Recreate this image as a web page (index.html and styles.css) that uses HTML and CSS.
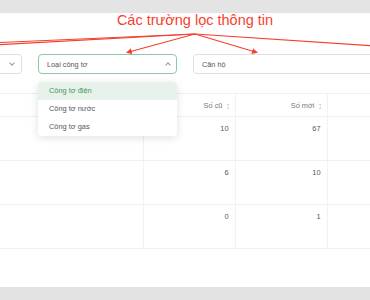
FILE: index.html
```html
<!DOCTYPE html>
<html lang="vi">
<head>
  <meta charset="UTF-8">
  <meta name="viewport" content="width=device-width, initial-scale=1.0">
  <title>Chỉ số công tơ</title>
  <link rel="stylesheet" href="styles.css">
</head>
<body>
  <div class="topbar"></div>
  <div class="panel">
    <h2 class="note">Các trường lọc thông tin</h2>

    <div class="filters">
      <div class="field field-first">
        <span class="chev chev-down"></span>
      </div>
      <div class="field field-active">
        <span class="field-text">Loại công tơ</span>
        <span class="chev chev-up"></span>
      </div>
      <div class="field field-input">
        <span class="field-text">Căn hộ</span>
      </div>
    </div>

    <div class="dropdown">
      <div class="option selected">Công tơ điện</div>
      <div class="option">Công tơ nước</div>
      <div class="option">Công tơ gas</div>
    </div>

    <table class="meters">
      <colgroup>
        <col class="col-main">
        <col class="col-num">
        <col class="col-num">
        <col class="col-num">
      </colgroup>
      <thead>
        <tr>
          <th></th>
          <th>Số cũ <span class="sorter"></span></th>
          <th>Số mới <span class="sorter"></span></th>
          <th></th>
        </tr>
      </thead>
      <tbody>
        <tr><td></td><td>10</td><td>67</td><td></td></tr>
        <tr><td></td><td>6</td><td>10</td><td></td></tr>
        <tr><td></td><td>0</td><td>1</td><td></td></tr>
      </tbody>
    </table>
  </div>
  <div class="bottombar"></div>

  <svg class="arrows" width="370" height="300" viewBox="0 0 370 300">
    <defs>
      <marker id="head" markerWidth="6" markerHeight="6" refX="5" refY="3" orient="auto" markerUnits="userSpaceOnUse">
        <path d="M0 0 L6 3 L0 6 Z" fill="#f4412f"/>
      </marker>
    </defs>
    <g stroke="#f4412f" stroke-width="1.2" fill="none">
      <line x1="195" y1="34" x2="-5" y2="42.7"/>
      <line x1="195" y1="34" x2="-5" y2="44.8"/>
      <line x1="195" y1="34" x2="127" y2="52.5" marker-end="url(#head)"/>
      <line x1="195" y1="34" x2="257" y2="52.5" marker-end="url(#head)"/>
      <line x1="195" y1="34" x2="375" y2="46"/>
    </g>
  </svg>
</body>
</html>
```

FILE: styles.css
```css
* { margin: 0; padding: 0; box-sizing: border-box; }

body {
  font-family: 'Liberation Sans', Arial, sans-serif;
  background: #e3e3e3;
  width: 370px;
  height: 300px;
  overflow: hidden;
  position: relative;
}

.topbar {
  height: 13px;
  background: #e4e4e4;
}

.panel {
  background: #fff;
  height: 274px;
  position: relative;
  overflow: hidden;
}

.note {
  font-size: 14.5px;
  line-height: 14px;
  font-weight: 400;
  color: #f4412f;
  text-align: center;
  padding-left: 20px;
  margin-bottom: 27px;
}

/* filter fields */
.filters {
  display: flex;
  gap: 16px;
  margin-left: -118px;
}

.field {
  flex-shrink: 0;
  height: 20px;
  border: 1px solid #dedede;
  border-radius: 4px;
  display: flex;
  align-items: center;
  padding-left: 8px;
  position: relative;
  font-size: 7.3px;
  color: #555;
}

.field-first { width: 140px; }
.field-active { width: 139px; border-color: #8ec8a2; }
.field-input { width: 200px; }

.chev {
  position: absolute;
  right: 7px;
  top: 7px;
  width: 4px;
  height: 4px;
  border-right: 1px solid #999;
  border-bottom: 1px solid #999;
}

.chev-down { transform: rotate(45deg); top: 6px; }
.chev-up { transform: rotate(-135deg); top: 8px; right: 6px; }

/* dropdown menu */
.dropdown {
  position: absolute;
  left: 38px;
  top: 69px;
  width: 139px;
  background: #fff;
  border-radius: 4px;
  box-shadow: 0 2px 8px rgba(0, 0, 0, 0.12);
  z-index: 2;
  overflow: hidden;
}

.option {
  height: 18px;
  line-height: 18px;
  padding-left: 11px;
  font-size: 7.4px;
  color: #555;
}

.option.selected {
  background: #e6f2ea;
  color: #3c9860;
}

/* table */
.meters {
  margin-top: 19px;
  margin-left: -60px;
  border-collapse: collapse;
  table-layout: fixed;
  width: 479px;
  font-size: 7.4px;
  color: #555;
}

.col-main { width: 203px; }
.col-num { width: 92px; }

.meters th,
.meters td {
  border-top: 1px solid #efefef;
  border-bottom: 1px solid #efefef;
  border-left: 1px solid #f2f2f6;
  text-align: right;
  padding-right: 6px;
  vertical-align: top;
}

.meters th:first-child,
.meters td:first-child { border-left: none; }

.meters th {
  height: 23px;
  font-weight: 400;
  color: #777;
  vertical-align: middle;
}

.meters td {
  height: 44px;
  padding-top: 7px;
}

.sorter {
  display: inline-block;
  width: 3px;
  height: 5px;
  margin-left: 1px;
  vertical-align: -1px;
  background:
    linear-gradient(to top right, transparent 50%, #d6d6d6 50%) top / 3px 2px no-repeat,
    linear-gradient(to bottom right, transparent 50%, #d6d6d6 50%) bottom / 3px 2px no-repeat;
}

.bottombar {
  height: 13px;
  background: #e3e3e3;
}

.arrows {
  position: absolute;
  left: 0;
  top: 0;
  pointer-events: none;
  z-index: 3;
}
```
